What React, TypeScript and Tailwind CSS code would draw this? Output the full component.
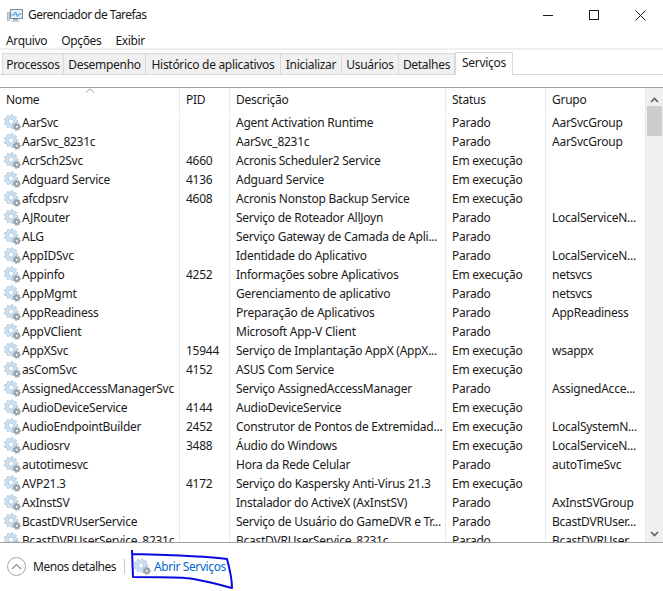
import React from "react";

const rows: [string, string, string, string, string][] = [
  ["AarSvc", "", "Agent Activation Runtime", "Parado", "AarSvcGroup"],
  ["AarSvc_8231c", "", "AarSvc_8231c", "Parado", "AarSvcGroup"],
  ["AcrSch2Svc", "4660", "Acronis Scheduler2 Service", "Em execução", ""],
  ["Adguard Service", "4136", "Adguard Service", "Em execução", ""],
  ["afcdpsrv", "4608", "Acronis Nonstop Backup Service", "Em execução", ""],
  ["AJRouter", "", "Serviço de Roteador AllJoyn", "Parado", "LocalServiceN..."],
  ["ALG", "", "Serviço Gateway de Camada de Apli...", "Parado", ""],
  ["AppIDSvc", "", "Identidade do Aplicativo", "Parado", "LocalServiceN..."],
  ["Appinfo", "4252", "Informações sobre Aplicativos", "Em execução", "netsvcs"],
  ["AppMgmt", "", "Gerenciamento de aplicativo", "Parado", "netsvcs"],
  ["AppReadiness", "", "Preparação de Aplicativos", "Parado", "AppReadiness"],
  ["AppVClient", "", "Microsoft App-V Client", "Parado", ""],
  ["AppXSvc", "15944", "Serviço de Implantação AppX (AppX...", "Em execução", "wsappx"],
  ["asComSvc", "4152", "ASUS Com Service", "Em execução", ""],
  ["AssignedAccessManagerSvc", "", "Serviço AssignedAccessManager", "Parado", "AssignedAcce..."],
  ["AudioDeviceService", "4144", "AudioDeviceService", "Em execução", ""],
  ["AudioEndpointBuilder", "2452", "Construtor de Pontos de Extremidad...", "Em execução", "LocalSystemN..."],
  ["Audiosrv", "3488", "Áudio do Windows", "Em execução", "LocalServiceN..."],
  ["autotimesvc", "", "Hora da Rede Celular", "Parado", "autoTimeSvc"],
  ["AVP21.3", "4172", "Serviço do Kaspersky Anti-Virus 21.3", "Em execução", ""],
  ["AxInstSV", "", "Instalador do ActiveX (AxInstSV)", "Parado", "AxInstSVGroup"],
  ["BcastDVRUserService", "", "Serviço de Usuário do GameDVR e Tr...", "Parado", "BcastDVRUser..."],
  ["BcastDVRUserService_8231c", "", "BcastDVRUserService_8231c", "Parado", "BcastDVRUser..."],
];

const tabs: [string, string][] = [
  ["Processos", "w-[62px] border-l"],
  ["Desempenho", "w-[82px]"],
  ["Histórico de aplicativos", "w-[135px]"],
  ["Inicializar", "w-[61px]"],
  ["Usuários", "w-[57px]"],
  ["Detalhes", "w-[56px]"],
];

function gearPath(cx: number, cy: number, ro: number, ri: number, teeth: number) {
  const pts: string[] = [];
  const step = (Math.PI * 2) / teeth;
  for (let i = 0; i < teeth; i++) {
    const a = i * step;
    const d = step * 0.25;
    const p = [
      [ri, a - d * 1.4],
      [ro, a - d * 0.7],
      [ro, a + d * 0.7],
      [ri, a + d * 1.4],
    ];
    p.forEach(([r, t]) => pts.push(`${(cx + r * Math.cos(t)).toFixed(2)},${(cy + r * Math.sin(t)).toFixed(2)}`));
  }
  return "M" + pts.join("L") + "Z";
}

function Gear() {
  return (
    <svg width="17" height="17" viewBox="0 0 17 17" className="shrink-0">
      <path d={gearPath(7, 7.5, 6.8, 5.1, 9)} fill="#cfe3f4" stroke="#9fbdd6" strokeWidth="0.7" />
      <circle cx="7" cy="7.5" r="2.7" fill="#ffffff" stroke="#a9c3d9" strokeWidth="0.9" />
      <path d={gearPath(12.8, 12.8, 3.7, 2.7, 7)} fill="#98a3ad" stroke="#78838c" strokeWidth="0.4" />
      <circle cx="12.8" cy="12.8" r="1.1" fill="#f2f5f7" />
    </svg>
  );
}

function Cell({ children, className = "pl-[6px]" }: { children?: React.ReactNode; className?: string }) {
  return (
    <div className={`flex items-center overflow-hidden whitespace-nowrap border-r border-[#e9e9e9] ${className}`}>
      {children}
    </div>
  );
}

const grid = "grid grid-cols-[180px_50px_216px_100px_100px]";

export default function App() {
  return (
    <div
      className="relative flex h-[591px] w-[663px] flex-col overflow-hidden bg-white text-[12px] tracking-[-0.25px] text-[#1a1a1a]"
      style={{ fontFamily: '"Noto Sans", "Open Sans", sans-serif' }}
    >
      {/* title bar */}
      <div className="flex h-[30px] shrink-0 items-center pl-[7px]">
        <svg width="16" height="16" viewBox="0 0 16 16" className="mr-[5px] shrink-0">
          <rect x="3.5" y="2.5" width="12" height="9" fill="#dfeefb" stroke="#7d8b97" />
          <path d="M4.5 8 L7 8 L8.5 5 L10.5 9.5 L12 7 L14.5 7" fill="none" stroke="#3c8fd6" strokeWidth="1" />
          <rect x="0.5" y="5.5" width="2" height="8" fill="#cfd6dc" stroke="#8b97a1" strokeWidth="0.6" />
          <rect x="6" y="12" width="5" height="1.5" fill="#9aa5ae" />
          <rect x="4.5" y="13.5" width="8" height="1.2" fill="#b7c0c7" />
        </svg>
        <span className="leading-none tracking-[-0.55px]">Gerenciador de Tarefas</span>
        <div className="ml-auto flex h-full items-center">
          <div className="flex h-full w-[46px] items-center justify-center">
            <div className="h-px w-[10px] bg-[#1a1a1a]" />
          </div>
          <div className="flex h-full w-[46px] items-center justify-center">
            <div className="h-[10px] w-[10px] border border-[#1a1a1a]" />
          </div>
          <div className="flex h-full w-[46px] items-center justify-center">
            <svg width="11" height="11" viewBox="0 0 11 11">
              <path d="M0.5 0.5 L10.5 10.5 M10.5 0.5 L0.5 10.5" stroke="#1a1a1a" strokeWidth="1" fill="none" />
            </svg>
          </div>
        </div>
      </div>

      {/* menu */}
      <div className="flex h-[18px] shrink-0 items-center gap-[14px] pl-[6px] pt-[3px] tracking-[-0.35px]">
        <span>Arquivo</span>
        <span>Opções</span>
        <span>Exibir</span>
      </div>
      <div className="h-[2px] shrink-0 bg-[#f0f0f0]" />

      {/* tabs */}
      <div className="flex h-[25px] shrink-0 items-end border-b border-[#d9d9d9] pl-[2px] tracking-[-0.3px]">
        {tabs.map(([t, c]) => (
          <div
            key={t}
            className={`flex h-[21px] items-center justify-center border-r border-t border-[#d9d9d9] bg-[#f0f0f0] pt-[1px] ${c}`}
          >
            {t}
          </div>
        ))}
        <div className="mb-[-1px] flex h-[23px] w-[58px] items-center justify-center border-x border-t border-[#d9d9d9] bg-white pb-[3px]">
          Serviços
        </div>
      </div>

      <div className="h-[12px] shrink-0" />

      {/* table */}
      <div className="flex min-h-0 flex-1 border-y border-[#a0a0a0]">
        <div className="relative min-w-0 flex-1 overflow-hidden">
          <svg width="10" height="5" viewBox="0 0 10 5" className="absolute left-[85px] top-0">
            <path d="M1 4.5 L5 0.8 L9 4.5" fill="none" stroke="#9a9a9a" strokeWidth="1" />
          </svg>
          <div className={`${grid} h-[25px] items-stretch pb-[1px]`}>
            {["Nome", "PID", "Descrição", "Status", "Grupo"].map((h) => (
              <Cell key={h}>{h}</Cell>
            ))}
          </div>
          {rows.map((r) => (
            <div key={r[0]} className={`${grid} h-[19px]`}>
              <Cell className="gap-[1px] pl-[4px]">
                <Gear />
                <span>{r[0]}</span>
              </Cell>
              <Cell>{r[1]}</Cell>
              <Cell>{r[2]}</Cell>
              <Cell>{r[3]}</Cell>
              <Cell>{r[4]}</Cell>
            </div>
          ))}
        </div>
        {/* scrollbar */}
        <div className="flex w-[17px] shrink-0 flex-col bg-[#f0f0f0]">
          <div className="flex h-[17px] items-center justify-center pt-[6px]">
            <svg width="9" height="6" viewBox="0 0 9 6">
              <path d="M1 5 L4.5 1.5 L8 5" fill="none" stroke="#606060" strokeWidth="1.6" />
            </svg>
          </div>
          <div className="mx-[1px] mt-[1px] h-[30px] bg-[#cdcdcd]" />
          <div className="flex-1" />
          <div className="flex h-[17px] items-center justify-center">
            <svg width="9" height="6" viewBox="0 0 9 6">
              <path d="M1 1 L4.5 4.5 L8 1" fill="none" stroke="#606060" strokeWidth="1.6" />
            </svg>
          </div>
        </div>
      </div>

      {/* footer */}
      <div className="relative flex h-[48px] shrink-0 items-center pb-[1px] pl-[7px]">
        <div className="flex h-[19px] w-[19px] items-center justify-center rounded-full border border-[#a6a6a6]">
          <svg width="11" height="7" viewBox="0 0 11 7">
            <path d="M1 6 L5.5 1.5 L10 6" fill="none" stroke="#8a8a8a" strokeWidth="1.1" />
          </svg>
        </div>
        <span className="ml-[7px] w-[84px] shrink-0 whitespace-nowrap tracking-[-0.45px]">Menos detalhes</span>
        <div className="ml-[7px] h-[15px] w-px bg-[#c8c8c8]" />
        <div className="ml-[9px] flex items-center gap-[3px] tracking-[-0.4px] text-[#0066cc]">
          <Gear />
          <span>Abrir Serviços</span>
        </div>
        <svg width="105" height="43" viewBox="0 0 105 43" className="pointer-events-none absolute left-[130px] top-[5px]">
          <path
            d="M2 2 L3 29 C20 29 45 29 55 30 C70 31 90 37 102 40 C102 30 100 22 97 11 C75 8 40 7 3 6"
            fill="none"
            stroke="#0a0ae0"
            strokeWidth="2"
            strokeLinejoin="round"
          />
        </svg>
      </div>
    </div>
  );
}
